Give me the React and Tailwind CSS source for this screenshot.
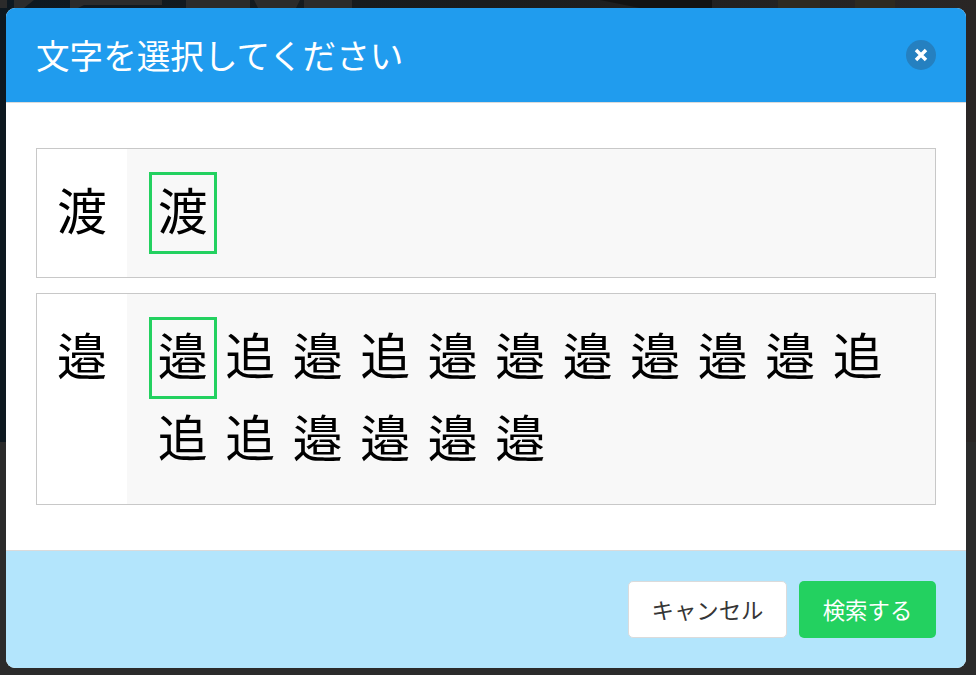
const FONT = "font-['Noto_Sans_CJK_JP','Noto_Sans',sans-serif]";

const row1 = ["邉", "追", "邉", "追", "邉", "邉", "邉", "邉", "邉", "邉", "追", "追", "追", "邉", "邉", "邉", "邉"];

function Cell({ ch, selected }) {
  return (
    <div
      className={
        "w-[67.5px] h-[82px] flex items-start justify-center text-[50px] leading-[66px] text-black border-[3px] " +
        (selected ? "border-[#23d160]" : "border-transparent")
      }
    >
      {ch}
    </div>
  );
}

function Row({ ch, items }) {
  return (
    <div className="flex border border-[#c8c8c8]">
      <div className="w-[90px] shrink-0 bg-white flex justify-center pt-[26px] text-[50px] leading-[66px] text-black">
        {ch}
      </div>
      <div className="flex-1 bg-[#f8f8f8] pl-[22px] pr-[20px] py-[23px] flex flex-wrap">
        {items.map((c, i) => (
          <Cell key={i} ch={c} selected={i === 0} />
        ))}
      </div>
    </div>
  );
}

export default function App() {
  return (
    <div className={"relative h-[675px] w-[976px] overflow-hidden bg-[#2b2b2b] " + FONT}>
      <div className="h-[442px] bg-gradient-to-r from-[#0d1820] via-[#1a1c1d] to-[#2a2625]">
        <svg width="976" height="8" viewBox="0 0 976 8" className="block">
          <path d="M0 0H7V8H0Z M14 0H34L24 8H14Z M70 0H162V5H84L78 8H70Z M186 0H250V8H186Z M254 0H300L296 8H258Z M304 0H352V8H304Z" fill="#2b2b2b" />
          <path d="M600 0H712V8H640Z" fill="#121212" />
          <path d="M778 0H820V8H778Z M855 0H895V8H855Z" fill="#2e2a20" />
        </svg>
      </div>
      <div className="absolute left-[6px] top-[8px] w-[960px] h-[660px] rounded-[9px] overflow-hidden flex flex-col bg-white">
        <div className="h-[95px] shrink-0 bg-[#209cee] border-b border-[#dbdbdb] flex items-center justify-between pl-[30px] pr-[30px]">
          <h1 className="text-[33.6px] leading-none text-white">文字を選択してください</h1>
          <button className="w-[30px] h-[30px] rounded-full bg-[#2580c0] flex items-center justify-center">
            <svg width="14" height="14" viewBox="0 0 14 14">
              <path d="M2 2 L12 12 M12 2 L2 12" stroke="#fff" strokeWidth="3.5" />
            </svg>
          </button>
        </div>
        <div className="flex-1 px-[30px] pt-[45px] flex flex-col gap-[15px]">
          <Row ch="渡" items={["渡"]} />
          <Row ch="邉" items={row1} />
        </div>
        <div className="h-[118px] shrink-0 bg-[#b3e5fc] border-t border-[#dbdbdb] flex items-center justify-end gap-[12px] pr-[30px]">
          <button className="w-[159px] h-[57px] rounded-[5px] bg-white border border-[#dbdbdb] text-[22.4px] text-[#363636]">
            キャンセル
          </button>
          <button className="w-[137px] h-[57px] rounded-[5px] bg-[#23d160] text-[22.4px] text-white">
            検索する
          </button>
        </div>
      </div>
    </div>
  );
}
